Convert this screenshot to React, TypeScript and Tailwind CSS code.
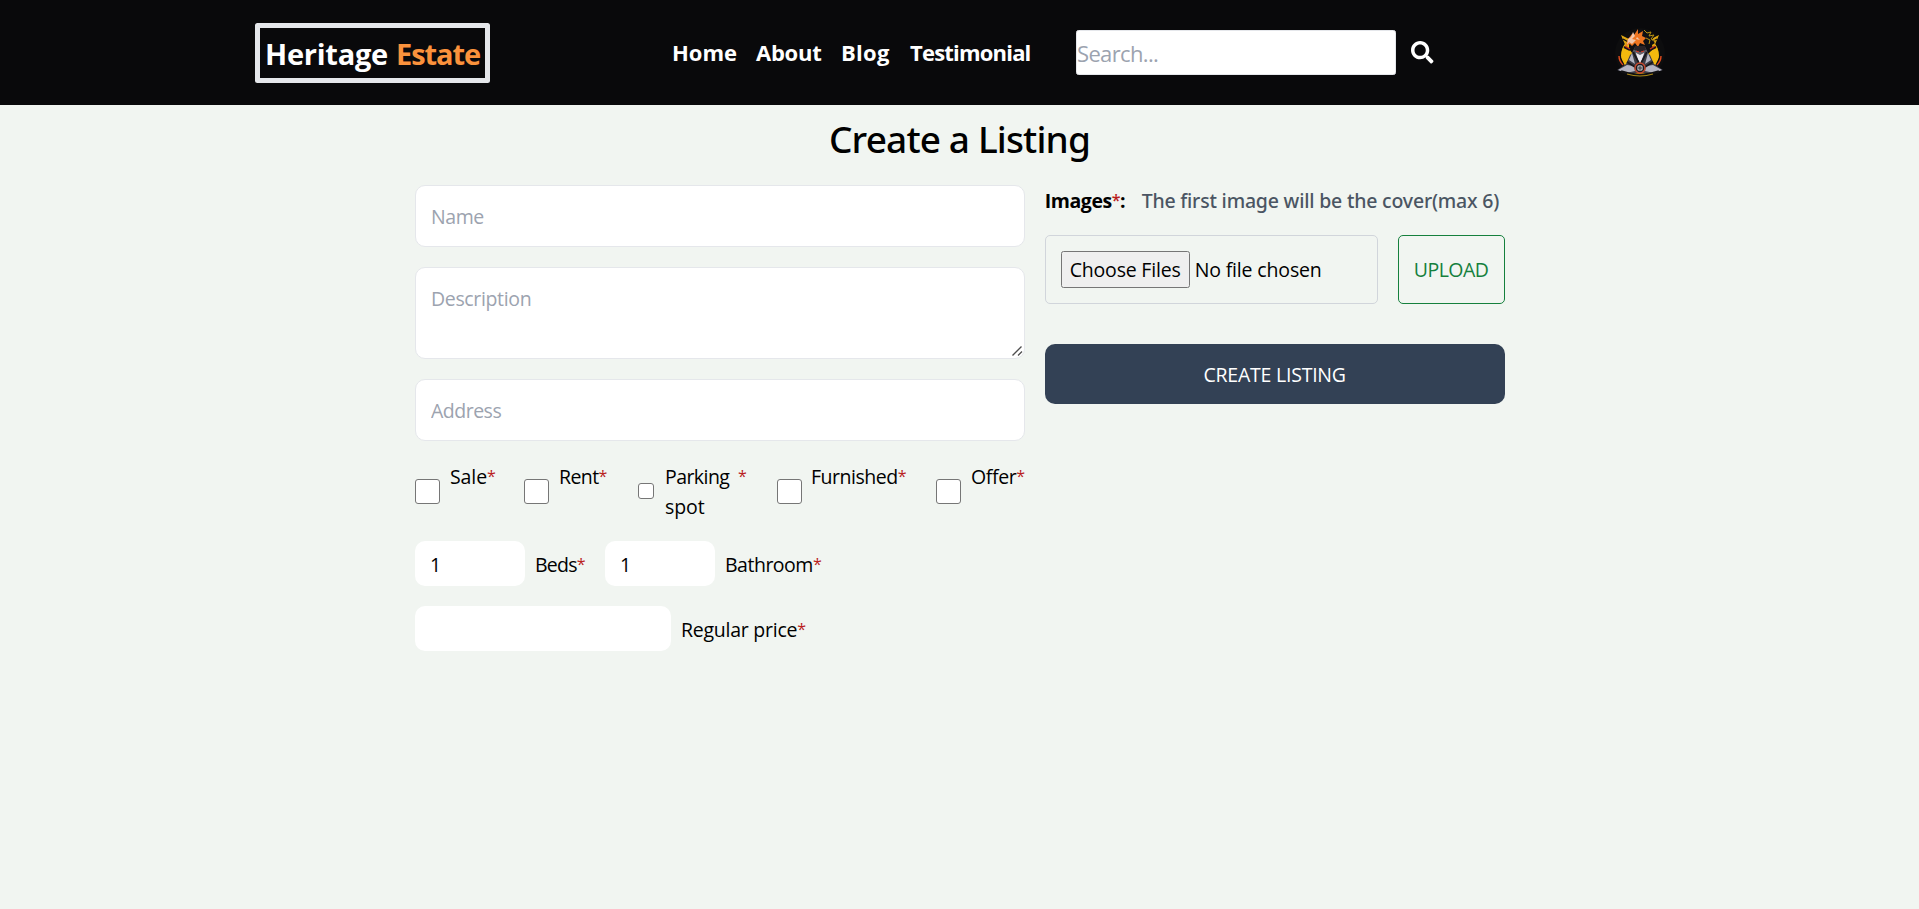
import React from "react";
import { FaSearch } from "react-icons/fa";

const font = 'font-["Open_Sans","Noto_Sans",sans-serif]';

function Star({ weight = "font-normal" }: { weight?: string }) {
  return <span className={`align-[2.5px] text-[16px] leading-none tracking-[-0.5px] text-[#b91c1c] ${weight}`}>*</span>;
}

function Avatar() {
  return (
    <svg viewBox="0 0 50 50" className="h-[50px] w-[50px]" aria-label="profile">
      <circle cx="25" cy="25" r="25" fill="#0d0d0e" />
      <circle cx="25" cy="27.500" r="19" fill="#f2b90e" />
      <path d="M6 7l10 5-5 7zM44 7l-10 5 5 7z" fill="#e0a712" />
      <path d="M8 11l7 4M42 11l-7 4" stroke="#0d0d0e" strokeWidth="1.2" />
      <path d="M14 14L18 6l8-5 7 3 6 5-2 3 3 3-3 2 1 4-5 5 3 9H15l3-9-4-5z" fill="#101013" />
      <path d="M29 2l3 3 4-1-2 4 5-1-3 4 5 2M31 10l4 2-1 4" fill="none" stroke="#b8900f" strokeWidth="1" />
      <path d="M13 11l4-5 2 1 4-6 0 5 5-3-1 5 4 2-3 3 2 4-5-2-2 4-3-4-3 3-2-2-4 2 1-4z" fill="#ee7420" />
      <path d="M13 11l3-2-1 4-3 4zM18 4l2 4-3 3 4 1-4 4-3-2zM22 9l3 3-4-1z" fill="#f2c6ab" />
      <path d="M20 19h10l3 6-3 8-5 4-5-4-3-8z" fill="#65636c" />
      <path d="M19 24l6 3 6-3-2 8-4 4-4-4z" fill="#ebe9ef" />
      <path d="M20 18h10l1 4-6 2-6-2z" fill="#292226" />
      <path d="M21 23l3 1M29 23l-3 1" stroke="#d33323" strokeWidth="1" />
      <path d="M9 19l6 3M41 19l-6 3" stroke="#1b1517" strokeWidth="2" />
      <path d="M10 18l5 3M40 18l-5 3" stroke="#c92f20" strokeWidth="1.3" />
      <path d="M4 28l5 10M46 28l-5 10" stroke="#0d0d0e" strokeWidth="2" />
      <path d="M4 28q0 5 4 9M46 28q0 5-4 9" fill="none" stroke="#e04a1c" strokeWidth="1.4" />
      <path d="M2 42l9-6 4-9 5-4 5 14 5-14 5 4 4 9 9 6-10 3H12z" fill="#3d3d47" />
      <path d="M3 42l9-5 7 1 1 5-9 2zM47 42l-9-5-7 1-1 5 9 2zM17 25l-3 7 6 4zM33 25l3 7-6 4z" fill="#b5b5c2" />
      <path d="M12 34l8 5M38 34l-8 5M18 24l6 11M32 24l-6 11" stroke="#18181d" strokeWidth="1.6" />
      <path d="M6 43.500q19 7 38 0" fill="none" stroke="#101013" strokeWidth="2.5" />
      <path d="M12 46q13 4 26 0" fill="none" stroke="#a98716" strokeWidth="1.1" />
      <circle cx="25" cy="40" r="5" fill="#1b1b20" stroke="#c94a30" strokeWidth="1.4" />
      <circle cx="25" cy="40" r="3" fill="#a9a9b2" />
      <path d="M25 37.500v5M22.500 40h5" stroke="#333" strokeWidth=".9" />
    </svg>
  );
}

function Check({ box }: { box: string }) {
  return (
    <input
      type="checkbox"
      className={`shrink-0 appearance-none self-center border border-[#767676] bg-white ${box}`}
    />
  );
}

const field =
  "block w-full rounded-[10px] border border-gray-200 bg-white p-[15px] text-[19.5px] leading-[30px] placeholder:text-[#9ca3af] placeholder:opacity-100 focus:outline-none";
const small = "block h-[45px] rounded-[10px] bg-white px-[15px] pt-[2px] text-[19.5px] focus:outline-none";

export default function App() {
  return (
    <div className={`h-[909px] overflow-hidden bg-[#f1f5f1] text-[19.5px] leading-[30px] text-black ${font}`}>
      <header className="flex h-[105px] items-center bg-[#09090b] pl-[255px]">
        <h1 className="flex h-[60px] w-[235px] items-center rounded-[2.5px] border-[5px] border-[#e5e7eb] pt-[2px] pl-[5px] text-[29px] font-bold whitespace-nowrap">
          <span className="w-[131px] tracking-[-0.26px] text-white">Heritage</span>
          <span className="tracking-[-1.08px] text-[#fb923c]">Estate</span>
        </h1>
        <nav className="ml-[181px] flex w-[405px] pb-[2px] text-[22px] font-bold text-white">
          <a className="w-[85px] pl-px">Home</a>
          <a className="w-[85px] tracking-[-0.25px]">About</a>
          <a className="w-[69px] tracking-[0.3px]">Blog</a>
          <a className="tracking-[-0.8px]">Testimonial</a>
        </nav>
        <input
          type="text"
          placeholder="Search..."
          className="h-[45px] w-[320px] rounded-[2.5px] border border-[#e5e7eb] bg-white text-[22px] tracking-[-0.65px] placeholder:text-[#9ca3af] focus:outline-none"
        />
        <FaSearch className="ml-[15px] h-[22.5px] w-[22.5px] text-white" />
        <div className="ml-[181px]">
          <Avatar />
        </div>
      </header>
      <main className="px-[415px]">
        <h2 className='h-[80px] pt-[11px] text-center font-["Noto_Sans",sans-serif] text-[37px] leading-[45px] font-medium tracking-[-0.85px]'>
          Create a Listing
        </h2>
        <form className="flex gap-5">
          <div className="flex w-[610px] flex-col">
            <input placeholder="Name" className={`${field} mb-5 h-[62px] tracking-[-0.4px]`} />
            <div className="relative mb-5">
              <textarea placeholder="Description" className={`${field} h-[92px] resize-none pt-[16px] tracking-[-0.35px]`} />
              <svg viewBox="0 0 12 12" className="absolute right-[2px] bottom-[2px] size-[12px]" stroke="#4d4d4d" strokeWidth="1.3">
                <path d="M1.500 10.500l9-9M7 10.500l4-4" />
              </svg>
            </div>
            <input placeholder="Address" className={`${field} h-[62px] tracking-[-0.5px]`} />
            <div className="mt-5 flex h-[60px] whitespace-nowrap">
              <Check box="size-[25px] rounded-[3px]" />
              <span className="ml-[10px] w-[74px] pt-px tracking-[-0.1px]">Sale<Star /></span>
              <Check box="size-[25px] rounded-[3px]" />
              <span className="ml-[10px] w-[79px] pt-px tracking-[-0.6px]">Rent<Star /></span>
              <Check box="size-[16px] rounded-[3px]" />
              <span className="ml-[11px] w-[73px] pt-px tracking-[-0.56px] whitespace-normal">Parking <span className="tracking-[-0.1px]">spot</span></span>
              <span className="w-[39px] pt-px"><Star /></span>
              <Check box="size-[25px] rounded-[3px]" />
              <span className="ml-[9px] w-[125px] pt-px tracking-[-0.48px]">Furnished<Star /></span>
              <Check box="size-[25px] rounded-[3px]" />
              <span className="ml-[10px] pt-px tracking-[-0.38px]">Offer<Star /></span>
            </div>
            <div className="mt-5 flex items-center">
              <input defaultValue="1" className={`${small} w-[110px]`} />
              <span className="ml-[10px] w-[70px] pt-[2px] tracking-[-0.75px]">Beds<Star /></span>
              <input defaultValue="1" className={`${small} w-[110px]`} />
              <span className="ml-[10px] pt-[2px] tracking-[-0.49px]">Bathroom<Star /></span>
            </div>
            <div className="mt-5 flex items-center">
              <input className={`${small} w-[256px]`} />
              <span className="ml-[10px] pt-[2px] tracking-[-0.25px]">Regular price<Star /></span>
            </div>
          </div>
          <div className="flex w-[460px] flex-col">
            <p className="flex h-[50px] pt-px whitespace-nowrap">
              <span className="w-[97px] font-bold tracking-[-0.4px]">Images<Star weight="font-semibold" />:</span>
              <span className='font-["Noto_Sans",sans-serif] font-medium tracking-[-0.2px] text-[#4b5563]'>
                The first image will be the cover(max 6)
              </span>
            </p>
            <div className="flex h-[69px] gap-5 whitespace-nowrap">
              <div className="flex w-[333px] items-center rounded-[5px] border border-[#d1d5db] pl-[15px]">
                <span className="flex h-[37px] w-[129px] items-center justify-center rounded-[2.5px] border border-[#767676] bg-[#efefef] tracking-[-0.2px]">
                  Choose Files
                </span>
                <span className="ml-[5px] tracking-[-0.15px]">No file chosen</span>
              </div>
              <button type="button" className="w-[107px] rounded-[5px] border border-[#15803d] tracking-[-0.5px] text-[#15803d]">
                UPLOAD
              </button>
            </div>
            <button type="button" className="mt-10 h-[60px] rounded-[10px] bg-[#334155] pt-[2px] tracking-[-0.23px] text-white">
              CREATE LISTING
            </button>
          </div>
        </form>
      </main>
    </div>
  );
}
